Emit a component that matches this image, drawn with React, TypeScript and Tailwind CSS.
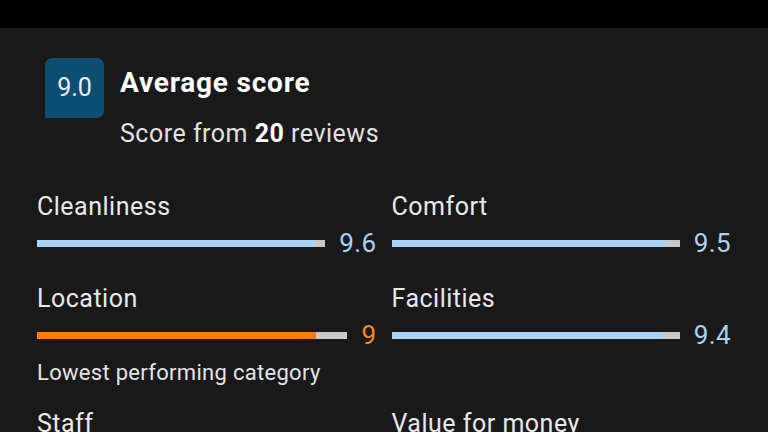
const ITEMS = [
  { label: 'Cleanliness', score: 9.6 },
  { label: 'Comfort', score: 9.5 },
  { label: 'Location', score: 9, lowest: true },
  { label: 'Facilities', score: 9.4 },
  { label: 'Staff', score: 9.5 },
  { label: 'Value for money', score: 9.3 },
];

function ScoreRow({ label, score, lowest }: { label: string; score: number; lowest?: boolean }) {
  return (
    <div>
      <div className="text-[25px] leading-[30px] tracking-[0.5px] text-[#e9e9e9]">{label}</div>
      <div className="mt-[6px] flex items-center gap-[14px]">
        <div className="flex-1 h-[7px] bg-[#c9c9c9]">
          <div
            className={`h-full ${lowest ? 'bg-[#ff7d0a]' : 'bg-[#aad4f6]'}`}
            style={{ width: `${score * 10}%` }}
          />
        </div>
        <span className={`text-[26px] leading-[30px] tracking-[0.4px] ${lowest ? 'text-[#f2882a]' : 'text-[#a9d1f2]'}`}>
          {score}
        </span>
      </div>
      {lowest && (
        <div className="mt-[13px] text-[22px] leading-[20px] tracking-[0.3px] text-[#e4e4e4]">
          Lowest performing category
        </div>
      )}
    </div>
  );
}

export default function App() {
  return (
    <div className="w-[768px] h-[432px] overflow-hidden bg-[#191919] font-['Roboto',sans-serif]">
      <div className="h-[28px] bg-black" />

      {/* Header */}
      <div className="flex items-start pl-[45px] pt-[30px]">
        <div className="w-[59px] h-[60px] rounded-[7px] rounded-bl-none bg-[#0b4e72] flex items-center justify-center text-[25px] text-[#e8f0f5]">
          9.0
        </div>
        <div className="ml-[16px] pt-[8px]">
          <div className="text-[28px] leading-[34px] tracking-[0.8px] font-bold text-white">Average score</div>
          <div className="mt-[19px] text-[25px] leading-[30px] tracking-[0.5px] text-[#e2e2e2]">
            Score from <span className="font-bold text-white">20</span> reviews
          </div>
        </div>
      </div>

      {/* Category grid */}
      <div className="mt-[43px] px-[37px] grid grid-cols-2 gap-x-[15px] gap-y-[26px] items-start">
        {ITEMS.map((item) => (
          <ScoreRow key={item.label} label={item.label} score={item.score} lowest={item.lowest} />
        ))}
      </div>
    </div>
  );
}
